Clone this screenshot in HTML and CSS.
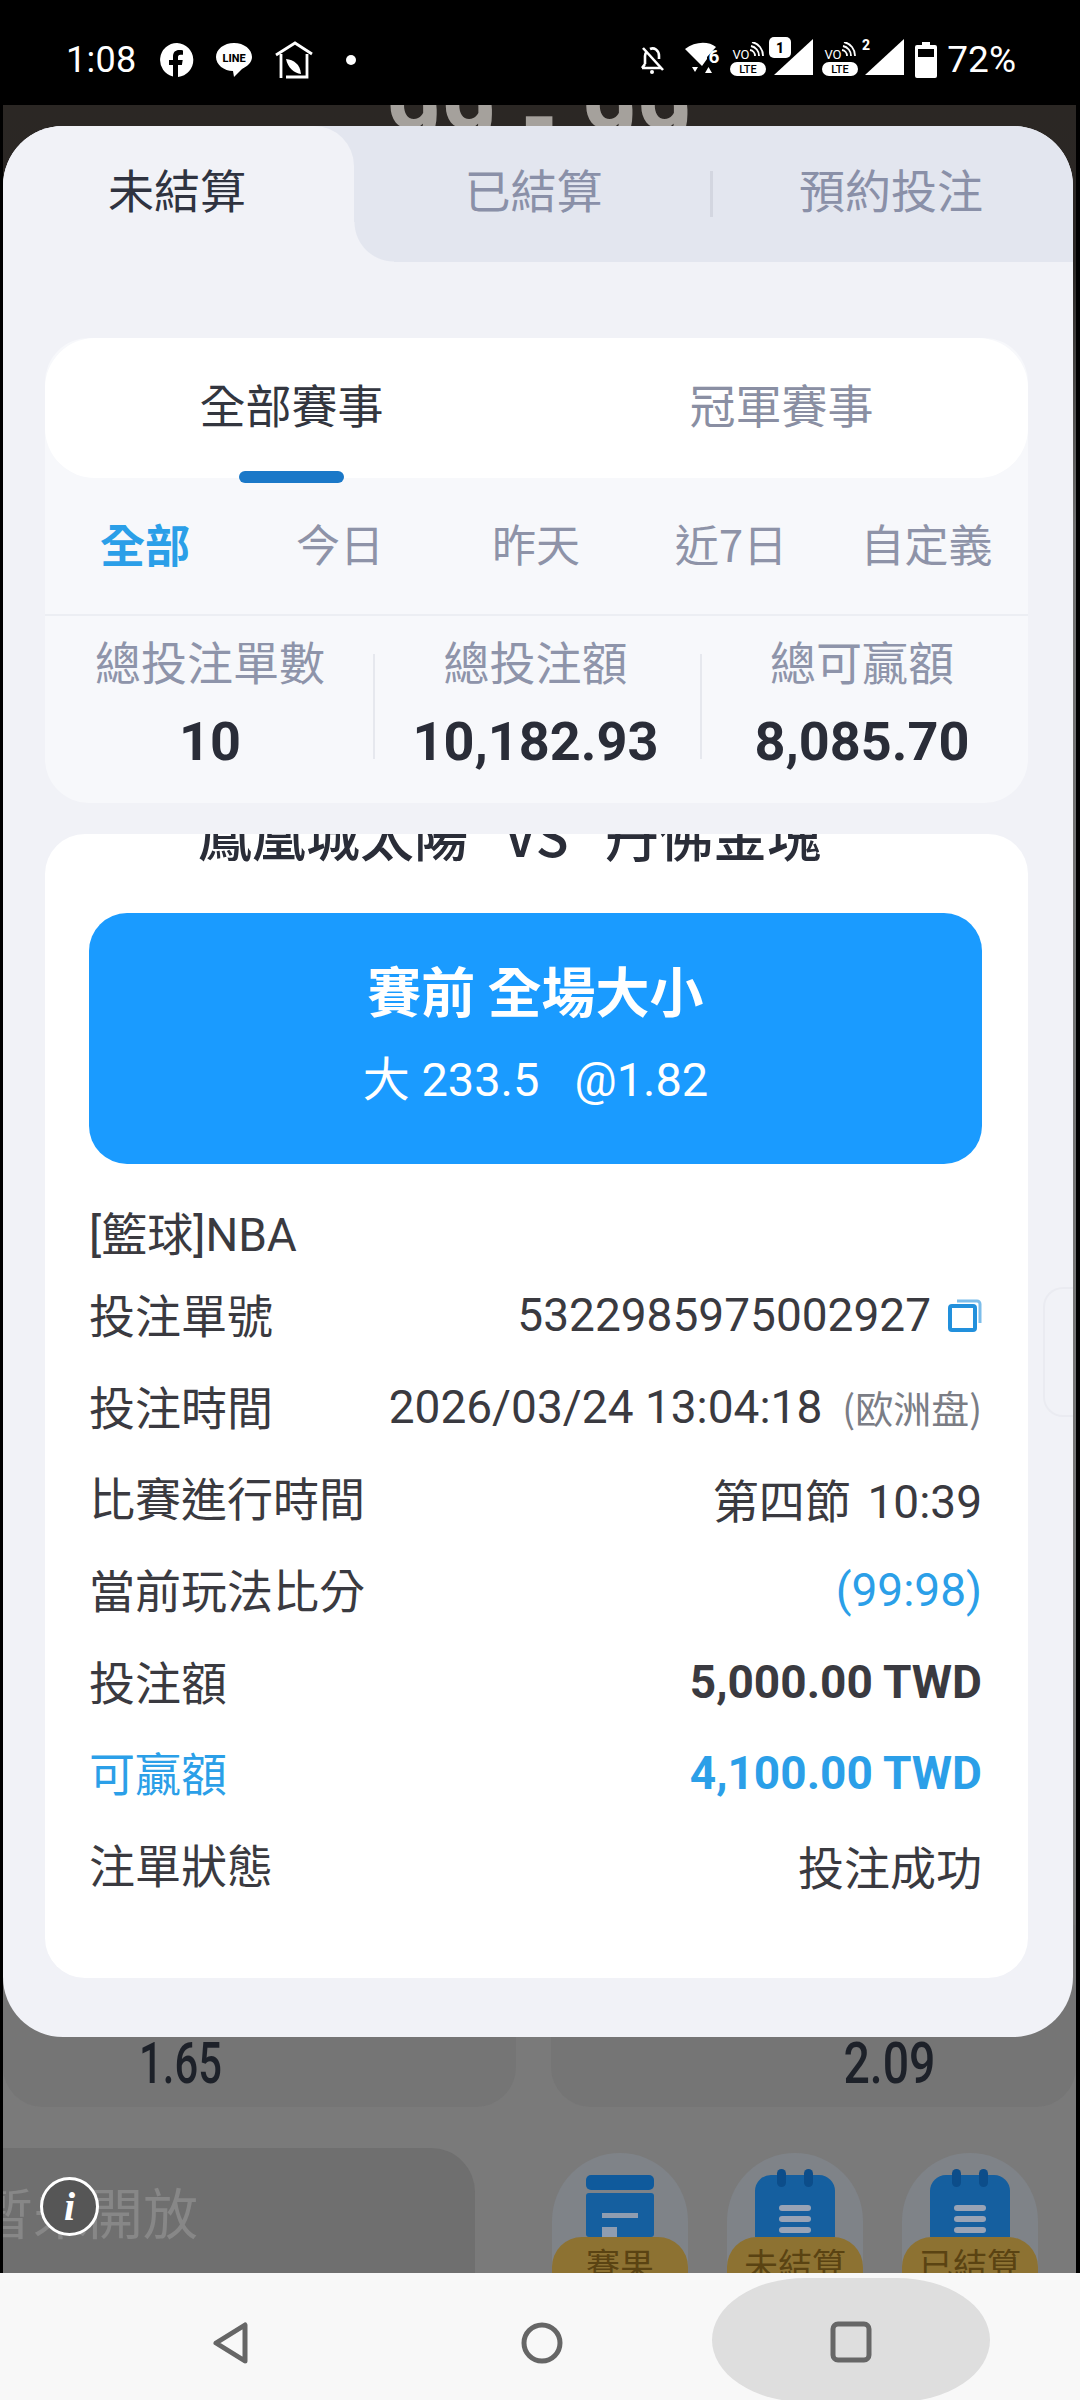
FILE: index.html
```html
<!DOCTYPE html>
<html lang="zh-Hant">
<head>
<meta charset="utf-8">
<title>注單</title>
<link rel="stylesheet" href="styles.css">
</head>
<body>
<div class="phone">
  <header class="status">
    <span class="time">1:08</span>
    <svg class="ico-fb" viewBox="0 0 34 34"><path fill="#fff" d="M17 0a17 17 0 0 0-4 33.500V22H9v-5h4v-3.600C13 9.200 15.500 7 19.200 7c1.500 0 3 .2 3.800.4v4.300h-2.400c-2 0-2.600 1.200-2.600 2.500V17h4.700l-.8 5H18v11.900A17 17 0 0 0 17 0z"/></svg>
    <svg class="ico-line" viewBox="0 0 36 36"><path fill="#fff" d="M18 1C8 1 0 7.300 0 15s8 14 17 14l1 6 8-8c6-3 10-7 10-12C36 7.300 28 1 18 1z"/><text x="18" y="20" text-anchor="middle" class="t-line">LINE</text></svg>
    <svg class="ico-home" viewBox="0 0 38 38" fill="none" stroke="#fff" stroke-width="2.800"><path d="M1 14 20 2l17 11"/><path d="M6 13v24M32 13v23H11"/><path fill="#fff" stroke="none" d="M11 18c8 1 14 5 15 15-7-1-13-6-15-15z"/></svg>
    <span class="dot"></span>
    <span class="spacer"></span>
    <svg class="ico-bell" viewBox="0 0 26 30" fill="none" stroke="#fff" stroke-width="2.600"><path d="M5 19V11c0-2 1-3.500 2-4.500M10 4c4-2 9 1 9 7v3M2 23h19M5 19l-3 4"/><path d="M3 3l20 22"/><circle cx="12" cy="27" r="2" fill="#fff" stroke="none"/></svg>
    <svg class="ico-wifi" viewBox="0 0 36 36"><path fill="#fff" d="M0 7C10-1 24-1 31 5L22 15v2l-5 7z"/><path fill="#fff" d="M7 25h6l-3 5zM20 31h7l-3.500-6z"/><text x="29" y="21" text-anchor="middle" class="t-six">6</text></svg>
    <svg class="ico-volte" viewBox="0 0 36 36"><text x="11" y="17" text-anchor="middle" class="t-vo">VO</text><g fill="none" stroke="#fff" stroke-width="1.800"><path d="M20 8a6 6 0 0 1 5 6M21 4a10 10 0 0 1 8 10M22 0a14 14 0 0 1 11 14"/></g><rect x="0" y="20" width="36" height="14" rx="7" fill="#fff"/><text x="18" y="31" text-anchor="middle" class="t-lte">LTE</text></svg>
    <svg class="ico-sig sim-one" viewBox="0 0 44 40"><path fill="#fff" d="M44 2v36H5z"/><rect x="0" y="0" width="22" height="21" rx="5" fill="#fff"/><text x="11" y="16" text-anchor="middle" class="t-sim-k">1</text></svg>
    <svg class="ico-volte" viewBox="0 0 36 36"><text x="11" y="17" text-anchor="middle" class="t-vo">VO</text><g fill="none" stroke="#fff" stroke-width="1.800"><path d="M20 8a6 6 0 0 1 5 6M21 4a10 10 0 0 1 8 10M22 0a14 14 0 0 1 11 14"/></g><rect x="0" y="20" width="36" height="14" rx="7" fill="#fff"/><text x="18" y="31" text-anchor="middle" class="t-lte">LTE</text></svg>
    <svg class="ico-sig" viewBox="0 0 44 40"><path fill="#fff" d="M44 2v36H5z"/><text x="6" y="13" text-anchor="middle" class="t-sim-w">2</text></svg>
    <svg class="ico-batt" viewBox="0 0 22 36"><path fill="#fff" d="M7 0h8v3h5a2 2 0 0 1 2 2v29a2 2 0 0 1-2 2H2a2 2 0 0 1-2-2V5a2 2 0 0 1 2-2h5z"/><rect x="3" y="7" width="16" height="8" fill="#000"/></svg>
    <span class="batt-text">72%</span>
  </header>

  <main class="screen">
    <section class="backdrop">
      <div class="hero"><span class="score">99 - 99</span></div>
      <div class="odds">
        <div class="odd-card odd-left"><span class="odd-num">1.65</span></div>
        <div class="odd-card odd-right"><span class="odd-num">2.09</span></div>
      </div>
      <div class="dock">
        <div class="closed"><span class="closed-text">暫未開放</span></div>
        <div class="shortcuts">
          <div class="shortcut">
            <svg class="sc-icon" viewBox="0 0 84 68"><rect x="8" y="6" width="68" height="15" rx="5" fill="#0f5a9c"/><rect x="8" y="24" width="68" height="44" rx="3" fill="#155f9f"/><rect x="24" y="44" width="36" height="5" fill="#8f9db0"/><rect x="24" y="58" width="15" height="10" fill="#8f9db0"/></svg>
            <span class="sc-label">賽果</span>
          </div>
          <div class="shortcut">
            <svg class="sc-icon" viewBox="0 0 84 68"><path d="M18 6h48a16 16 0 0 1 16 16v46H2V22A16 16 0 0 1 18 6z" fill="#155f9f"/><rect x="24" y="0" width="9" height="18" rx="4.500" fill="#0c4d8a"/><rect x="51" y="0" width="9" height="18" rx="4.500" fill="#0c4d8a"/><g fill="#98a3b5"><rect x="26" y="36" width="32" height="6" rx="3"/><rect x="26" y="47" width="32" height="6" rx="3"/><rect x="26" y="58" width="32" height="6" rx="3"/></g></svg>
            <span class="sc-label">未結算</span>
          </div>
          <div class="shortcut">
            <svg class="sc-icon" viewBox="0 0 84 68"><path d="M18 6h48a16 16 0 0 1 16 16v46H2V22A16 16 0 0 1 18 6z" fill="#155f9f"/><rect x="24" y="0" width="9" height="18" rx="4.500" fill="#0c4d8a"/><rect x="51" y="0" width="9" height="18" rx="4.500" fill="#0c4d8a"/><g fill="#98a3b5"><rect x="26" y="36" width="32" height="6" rx="3"/><rect x="26" y="47" width="32" height="6" rx="3"/><rect x="26" y="58" width="32" height="6" rx="3"/></g></svg>
            <span class="sc-label">已結算</span>
          </div>
        </div>
      </div>
    </section>

    <div class="info-badge"><span>i</span></div>

    <section class="sheet">
      <nav class="tabs">
        <div class="tab tab-active">未結算</div>
        <div class="tab">已結算</div>
        <div class="tab-sep"></div>
        <div class="tab">預約投注</div>
      </nav>
      <div class="sheet-body">
        <div class="summary">
          <div class="event-tabs">
            <div class="event-tab event-on">全部賽事<i class="event-bar"></i></div>
            <div class="event-tab">冠軍賽事</div>
          </div>
          <div class="filters">
            <span class="filter filter-on">全部</span>
            <span class="filter">今日</span>
            <span class="filter">昨天</span>
            <span class="filter">近7日</span>
            <span class="filter">自定義</span>
          </div>
          <div class="stats">
            <div class="stat"><div class="stat-label">總投注單數</div><div class="stat-value">10</div></div>
            <div class="stat stat-line"><div class="stat-label">總投注額</div><div class="stat-value">10,182.93</div></div>
            <div class="stat stat-line"><div class="stat-label">總可贏額</div><div class="stat-value">8,085.70</div></div>
          </div>
        </div>

        <article class="bet">
          <div class="teams">鳳凰城太陽&nbsp;&nbsp; VS &nbsp;&nbsp;丹佛金塊</div>
          <div class="pick">
            <div class="pick-title">賽前 全場大小</div>
            <div class="pick-sub">大 233.5<span class="pick-odds">@1.82</span></div>
          </div>
          <div class="league">[籃球]NBA</div>
          <div class="row"><span>投注單號</span><span class="val">5322985975002927<svg class="copy" viewBox="0 0 34 34" fill="none" stroke="#2290dc" stroke-width="4"><rect x="2" y="8" width="25" height="24" rx="2"/><path d="M9 3h20a3 3 0 0 1 3 3v19" stroke-width="3" stroke="#7dbdea"/></svg></span></div>
          <div class="row"><span>投注時間</span><span class="val">2026/03/24 13:04:18<small class="odds-type">(欧洲盘)</small></span></div>
          <div class="row"><span>比賽進行時間</span><span class="val val-tight">第四節 &nbsp;10:39</span></div>
          <div class="row"><span>當前玩法比分</span><span class="val val-blue">(99:98)</span></div>
          <div class="row"><span>投注額</span><span class="val val-bold">5,000.00 TWD</span></div>
          <div class="row row-blue"><span>可贏額</span><span class="val val-bold">4,100.00 TWD</span></div>
          <div class="row"><span>注單狀態</span><span class="val">投注成功</span></div>
        </article>
      </div>
      <div class="side-handle"></div>
    </section>
  </main>

  <footer class="navbar">
    <div class="nav-cell nav-back"><svg class="nav-ico" viewBox="0 0 40 44" fill="none" stroke="#666" stroke-width="5" stroke-linejoin="round"><path d="M34 4v36L5 22z"/></svg></div>
    <div class="nav-cell nav-home"><svg class="nav-ico" viewBox="0 0 44 44" fill="none" stroke="#666" stroke-width="5"><circle cx="22" cy="22" r="18"/></svg></div>
    <div class="nav-cell nav-pill"><svg class="nav-ico" viewBox="0 0 44 44" fill="none" stroke="#666" stroke-width="5"><rect x="4" y="4" width="36" height="36" rx="5"/></svg></div>
  </footer>
</div>
</body>
</html>
```

FILE: styles.css
```css
* { box-sizing: border-box; }
html, body { margin: 0; padding: 0; }
body { width: 1080px; height: 2400px; overflow: hidden; background: #000; font-family: "Noto Sans CJK TC", "Noto Sans", sans-serif; }
.phone { width: 1080px; height: 2400px; display: flex; flex-direction: column; }

/* status bar */
.status { height: 105px; flex: none; background: #000; color: #fff; display: flex; align-items: center; padding: 14px 64px 0 66px; font-family: Roboto, sans-serif; }
.time { font-size: 36px; width: 94px; letter-spacing: .3px; }
.ico-fb { width: 34px; height: 34px; }
.ico-line { width: 36px; height: 36px; margin-left: 22px; }
.ico-home { width: 38px; height: 38px; margin-left: 23px; }
.dot { width: 10px; height: 10px; border-radius: 50%; background: #fff; margin-left: 33px; }
.spacer { flex: 1; }
.ico-bell { width: 26px; height: 30px; }
.ico-wifi { width: 36px; height: 36px; margin-left: 19px; }
.ico-volte { width: 36px; height: 36px; margin-left: 9px; }
.ico-sig { width: 44px; height: 40px; margin-left: 2px; margin-top: -6px; }
.ico-sig.sim-one { margin-left: 3px; }
.ico-batt { width: 22px; height: 36px; margin-left: 11px; }
.batt-text { font-size: 37px; margin-left: 10px; }
.t-line { font: 800 11px Roboto, sans-serif; fill: #000; }
.t-six { font: 700 19px Roboto, sans-serif; fill: #fff; }
.t-vo { font: 400 13px Roboto, sans-serif; fill: #fff; }
.t-lte { font: 500 11px Roboto, sans-serif; fill: #000; }
.t-sim-k { font: 800 14px Roboto, sans-serif; fill: #000; }
.t-sim-w { font: 800 14px Roboto, sans-serif; fill: #fff; }

/* dimmed page behind the sheet */
.screen { position: relative; flex: 1; overflow: hidden; background: #000; padding: 0 4px 0 3px; }
.backdrop { height: 100%; display: flex; flex-direction: column; background: #7a7a7a; font-family: Roboto, sans-serif; }
.hero { height: 1820px; flex: none; background: linear-gradient(#2b2724 0, #2a2725 160px, #6f6f6f 420px, #777 1820px); text-align: center; overflow: hidden; }
.score { display: block; font-size: 96px; font-weight: 700; line-height: 100px; color: #a5a19c; margin-top: -37px; }
.odds { height: 182px; flex: none; display: flex; gap: 35px; }
.odd-card { background: #757575; border-radius: 0 0 40px 40px; text-align: center; color: #1d2129; padding-top: 109px; }
.odd-left { flex: 0 0 513px; padding-right: 158px; }
.odd-right { flex: 1; padding-left: 152px; }
.odd-num { display: block; font-size: 58px; line-height: 58px; font-weight: 500; transform: scaleX(.72); }
.odd-right .odd-num { transform: scaleX(.8); }
.dock { flex: 1; margin-top: 41px; display: flex; min-height: 0; }
.closed { width: 472px; height: 140px; background: #6f6f6f; border-radius: 0 44px 0 0; overflow: hidden; }
.closed-text { display: block; margin: 22px 0 0 -25px; font: 400 55px "Noto Sans CJK TC", sans-serif; color: #878787; white-space: nowrap; }
.shortcuts { flex: 1; display: flex; padding: 5px 32px 0 77px; gap: 39px; }
.shortcut { width: 136px; height: 140px; border-radius: 68px 68px 0 0; background: #7f8388; display: flex; flex-direction: column; align-items: center; overflow: hidden; }
.sc-icon { width: 84px; height: 68px; flex: none; margin-top: 16px; }
.sc-label { width: 136px; height: 70px; flex: none; border-radius: 30px; background: #8d7232; color: #5a4312; text-align: center; font: 400 34px/54px "Noto Sans CJK TC", sans-serif; }
.info-badge { position: absolute; left: 40px; top: 2072px; width: 59px; height: 59px; border-radius: 50%; border: 3px solid #fff; background: #565656; display: flex; align-items: center; justify-content: center; color: #fff; font: italic 700 40px "Liberation Serif", serif; }

/* sheet */
.sheet { position: absolute; left: 3px; top: 21px; width: 1070px; height: 1911px; border-radius: 60px; overflow: hidden; background: #f1f2f7; display: flex; flex-direction: column; }
.tabs { height: 136px; flex: none; display: flex; align-items: center; background: #e3e6ef; color: #8a90a8; font-size: 46px; }
.tab { text-align: center; line-height: 124px; height: 136px; }
.tab:nth-child(2) { width: 359px; }
.tab:last-child { flex: 1; padding-right: 7px; }
.tab-active { position: relative; width: 351px; padding-right: 3px; background: #f1f2f7; color: #2f3340; border-radius: 60px 40px 0 0; }
.tab-active::after { content: ""; position: absolute; right: -40px; bottom: 0; width: 40px; height: 40px; background: radial-gradient(circle at 100% 0, transparent 39px, #f1f2f7 40px); }
.tab-sep { width: 3px; height: 46px; background: #d3d6e0; margin: 0 3px 0 -3px; }
.sheet-body { flex: 1; padding: 76px 45px 0 42px; display: flex; flex-direction: column; gap: 31px; }

.summary { height: 465px; flex: none; background: #f7f8fb; border-radius: 44px; display: flex; flex-direction: column; }
.event-tabs { height: 140px; flex: none; display: flex; background: #fff; border-radius: 50px; font-size: 46px; color: #8a8fa3; }
.event-tab { position: relative; text-align: center; line-height: 130px; }
.event-tab:first-child { width: 493px; color: #33363f; }
.event-tab:last-child { flex: 1; padding-right: 3px; }
.event-bar { position: absolute; left: 194px; bottom: -5px; width: 105px; height: 12px; border-radius: 6px; background: #1a78c8; }
.filters { height: 138px; flex: none; border-bottom: 2px solid #eceef3; display: grid; grid-template-columns: 200px 190px 202px 188px 203px; align-items: center; font-size: 44px; color: #8e93a8; text-align: center; padding-bottom: 6px; }
.filter-on { color: #2b9fe8; font-weight: 700; font-size: 45px; }
.stats { flex: 1; display: grid; grid-template-columns: 330px 327px 326px; }
.stat { position: relative; text-align: center; }
.stat-line { padding-right: 6px; }
.stat-line::before { content: ""; position: absolute; left: -2px; top: 38px; width: 2px; height: 105px; background: #e6e8ee; }
.stat-label { font-size: 46px; line-height: 60px; margin-top: 14px; color: #8e94aa; }
.stat-value { font: 700 54px/60px Roboto, sans-serif; color: #2a2d38; margin-top: 22px; }

.bet { flex: 1; margin-bottom: 59px; background: #fff; border-radius: 40px; padding: 0 46px 0 44px; overflow: hidden; color: #3a3a40; }
.teams { height: 70px; margin-top: -32px; text-align: center; font-size: 54px; line-height: 64px; font-weight: 500; color: #2a2d38; white-space: pre; padding-right: 52px; }
.pick { height: 251px; margin-top: 41px; background: #1a9bff; border-radius: 38px; color: #fff; text-align: center; display: flex; flex-direction: column; align-items: center; }
.pick-title { font-size: 54px; font-weight: 700; line-height: 70px; margin-top: 42px; }
.pick-sub { font: 400 47px/60px Roboto, "Noto Sans CJK TC", sans-serif; margin-top: 25px; white-space: pre; }
.pick-odds { margin-left: 35px; }
.league { font: 400 46px/60px Roboto, "Noto Sans CJK TC", sans-serif; margin-top: 41px; }
.row { display: flex; justify-content: space-between; align-items: center; font-size: 46px; height: 91.7px; }
.league + .row { margin-top: 2px; }
.val { font-family: Roboto, "Noto Sans CJK TC", sans-serif; font-size: 46px; display: flex; align-items: center; white-space: pre; padding-top: 4px; }
.val-tight { word-spacing: -3px; }
.val-blue { color: #2b9fe8; }
.val-bold { font-weight: 700; }
.row-blue { color: #2b9fe8; }
.odds-type { font-size: 38px; color: #7b7d85; margin-left: 20px; font-family: "Noto Sans CJK SC", sans-serif; }
.copy { width: 34px; height: 34px; margin-left: 17px; }
.side-handle { position: absolute; right: 0; top: 1161px; width: 30px; height: 130px; border: 2px solid #eaebf1; border-right: 0; border-radius: 20px 0 0 20px; }

/* android navigation bar */
.navbar { height: 127px; flex: none; background: #f8f8f8; display: flex; overflow: hidden; }
.nav-cell { display: flex; align-items: center; justify-content: center; padding-top: 13px; }
.nav-back { width: 462px; }
.nav-home { width: 160px; }
.nav-pill { background: #dedede; width: 278px; height: 124px; margin: 5px 0 0 90px; border-radius: 93px / 62px; padding-top: 4px; }
.nav-ico { width: 44px; height: 44px; }
```
